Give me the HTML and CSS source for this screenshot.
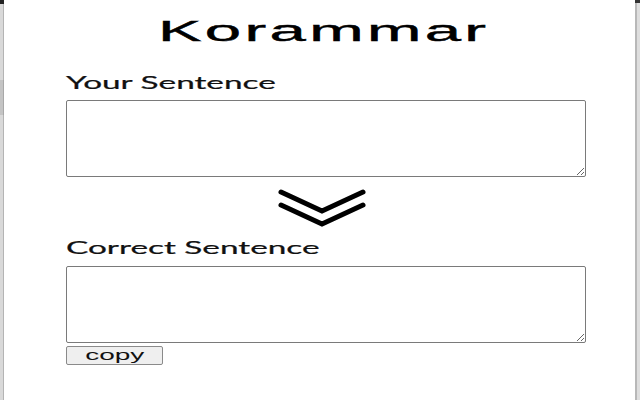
FILE: index.html
```html
<!DOCTYPE html>
<html lang="en">
<head>
<meta charset="utf-8">
<title>Korammar</title>
<link rel="stylesheet" href="styles.css">
</head>
<body>
<div class="page">
  <div class="edge-left">
    <div class="edge-mark"></div>
    <div class="edge-gap-a"></div>
    <div class="edge-block"></div>
    <div class="edge-rest"></div>
  </div>
  <main class="main">
    <h1 class="title"><span class="wide title-text">Korammar</span></h1>
    <label class="label label-first" for="src"><span class="wide label-text">Your Sentence</span></label>
    <textarea id="src" class="box"></textarea>
    <svg class="arrows" width="100" height="44" viewBox="0 0 100 44" aria-hidden="true">
      <polyline points="9,6 50,25 91,6" fill="none" stroke="#000" stroke-width="5" stroke-linecap="round" stroke-linejoin="miter"/>
      <polyline points="9,19 50,38 91,19" fill="none" stroke="#000" stroke-width="5" stroke-linecap="round" stroke-linejoin="miter"/>
    </svg>
    <label class="label label-second" for="out"><span class="wide label-text">Correct Sentence</span></label>
    <textarea id="out" class="box box-out"></textarea>
    <button class="copy" type="button"><span class="wide copy-text">copy</span></button>
  </main>
  <div class="edge-right">
    <div class="edge-mark-r"></div>
  </div>
</div>
</body>
</html>
```

FILE: styles.css
```css
html, body {
  margin: 0;
  padding: 0;
  background: #fff;
}

.page {
  display: flex;
  width: 640px;
  height: 400px;
  overflow: hidden;
}

.edge-left {
  width: 4px;
  display: flex;
  flex-direction: column;
  background: linear-gradient(to right, #d9d9d9 0 3px, #b4b4b4 3px 4px);
}
.edge-mark {
  height: 4px;
  background: #222;
}
.edge-gap-a {
  height: 76px;
}
.edge-block {
  height: 35px;
  background: linear-gradient(to right, #c4c4c4 0 3px, #a8a8a8 3px 4px);
}
.edge-rest {
  flex: 1;
}

.edge-right {
  width: 5px;
  background: linear-gradient(to right, #b8b8b8 0 2px, #dedede 2px 5px);
}
.edge-mark-r {
  height: 3px;
  background: #333;
}

.main {
  flex: 1;
  padding: 14px 0 0 62px;
  display: flex;
  flex-direction: column;
  align-items: flex-start;
}

.wide {
  display: inline-block;
  transform: scaleX(2);
  transform-origin: left center;
  white-space: nowrap;
}

.title {
  align-self: stretch;
  margin: 0 0 0 -62px;
  padding-left: 8px;
  text-align: center;
  font-family: "Liberation Sans", Arial, sans-serif;
  font-weight: normal;
  font-size: 29px;
  line-height: 34px;
  letter-spacing: 1.5px;
  color: #000;
}
.title-text {
  transform: scaleX(2.25);
  transform-origin: center center;
  -webkit-text-stroke: 0.4px #000;
}

.label {
  display: block;
  font-family: Lato, "Noto Sans", sans-serif;
  font-size: 17px;
  line-height: 20px;
  color: #111;
}
.label-text {
  transform: scaleX(1.96);
  -webkit-text-stroke: 0.2px #111;
}
.label-first {
  margin-top: 25px;
}
.label-second {
  margin-top: 8px;
}

.box {
  display: block;
  box-sizing: border-box;
  width: 520px;
  height: 77px;
  margin: 7px 0 0 0;
  border: 1px solid #7a7a7a;
  border-radius: 2px;
  background: #fff;
  resize: both;
}
.box-out {
  margin-top: 8px;
}

.arrows {
  display: block;
  margin: 9px 0 0 206px;
}

.copy {
  margin-top: 3px;
  width: 97px;
  height: 19px;
  padding: 0;
  box-sizing: border-box;
  border: 1px solid #8a8a8a;
  border-radius: 2px;
  background: #efefef;
  display: flex;
  justify-content: center;
  align-items: center;
}
.copy-text {
  font-family: "Liberation Sans", Arial, sans-serif;
  font-size: 14px;
  line-height: 17px;
  color: #111;
  transform-origin: center center;
}
```
